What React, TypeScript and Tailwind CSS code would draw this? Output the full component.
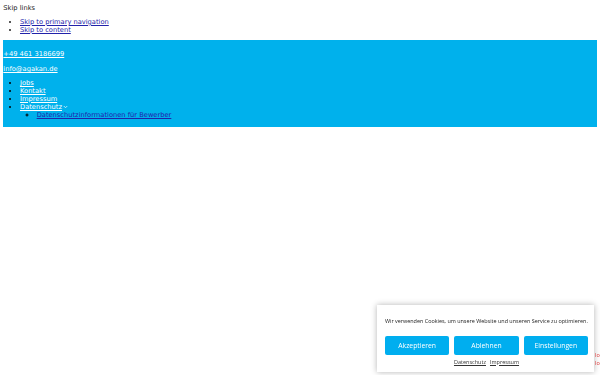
import React from 'react'

const Chevron = () => (
  <svg width="5" height="4" viewBox="0 0 10 8" className="inline-block align-top ml-[1px] mt-[1px]">
    <path d="M1.5 2 L5 5.5 L8.5 2" fill="none" stroke="#ffffff" strokeWidth="1.4" />
  </svg>
)

export default function App() {
  return (
    <div className="min-h-[375px] bg-white px-[3.33px] pt-[5.3px] text-[6.7px] leading-[7.9px] text-[#222] [font-family:'DejaVu_Sans',sans-serif]">
      <div>Skip links</div>
      <ul className="mt-[5.7px] mb-[5.67px] list-disc pl-[16.67px]">
        <li>
          <a href="#" className="text-[#2222aa] underline">Skip to primary navigation</a>
        </li>
        <li>
          <a href="#" className="text-[#2222aa] underline">Skip to content</a>
        </li>
      </ul>

      <header className="bg-[#00b1ec] pt-[10.5px] pb-[1px]">
        <p className="mb-[7.67px]">
          <a href="#" className="text-white underline">+49 461 3186699</a>
        </p>
        <p className="mb-[5.67px]">
          <a href="#" className="text-white underline">info@agakan.de</a>
        </p>
        <ul className="mb-[6.67px] list-disc pl-[16.67px] text-black">
          <li><a href="#" className="text-white underline">Jobs</a></li>
          <li><a href="#" className="text-white underline">Kontakt</a></li>
          <li><a href="#" className="text-white underline">Impressum</a></li>
          <li>
            <a href="#" className="text-white underline">Datenschutz</a>
            <Chevron />
            <ul className="list-[circle] pl-[16.67px]">
              <li>
                <a href="#" className="text-[#2222aa] underline">Datenschutzinformationen für Bewerber</a>
              </li>
            </ul>
          </li>
        </ul>
      </header>

      <div className="fixed right-[6px] bottom-[3px] w-[217px] bg-white pl-[8px] pr-[6px] pt-[12.5px] pb-[6.5px] shadow-[0_0_6px_rgba(0,0,0,0.3)] [font-family:'Open_Sans',sans-serif]">
        <p className="text-[5.45px] leading-[7px] text-[#222] whitespace-nowrap">
          Wir verwenden Cookies, um unsere Website und unseren Service zu optimieren.
        </p>
        <div className="mt-[11.5px] flex gap-[5px]">
          <button className="h-[19px] flex-1 rounded-[2px] bg-[#00aeef] text-[6.8px] text-white">Akzeptieren</button>
          <button className="h-[19px] flex-1 rounded-[2px] bg-[#00aeef] text-[6.8px] text-white">Ablehnen</button>
          <button className="h-[19px] flex-1 rounded-[2px] bg-[#00aeef] text-[6.8px] text-white">Einstellungen</button>
        </div>
        <div className="mt-[3.5px] flex justify-center gap-[4px] text-[5.5px] leading-[7px] text-[#333]">
          <a href="#" className="underline">Datenschutz</a>
          <a href="#" className="underline">Impressum</a>
        </div>
      </div>

      <div className="fixed left-[595px] top-[351px] w-[5px] overflow-hidden text-[5.5px] leading-[8px] text-[#d33] [font-family:'Open_Sans',sans-serif]">
        <div className="whitespace-nowrap">lo</div>
        <div className="whitespace-nowrap">lo</div>
      </div>
    </div>
  )
}
